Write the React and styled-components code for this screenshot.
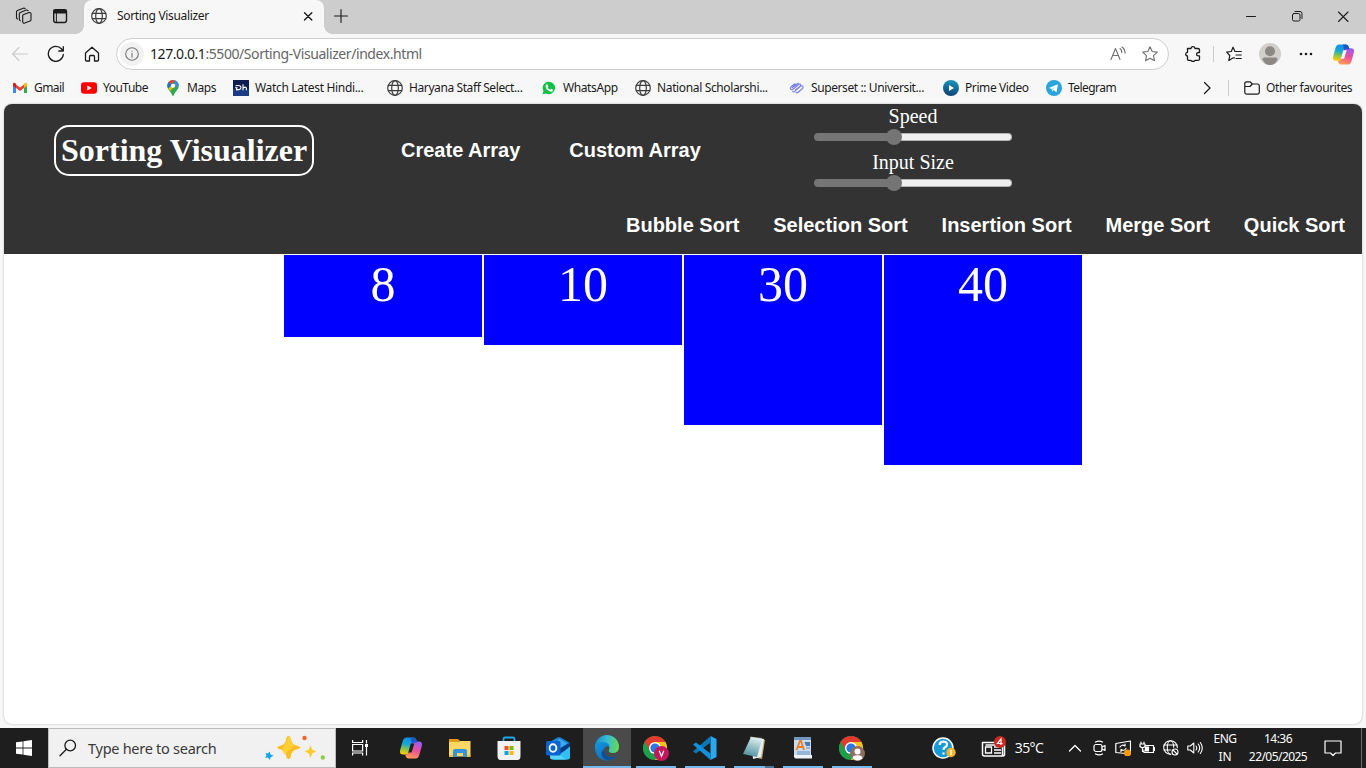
import React from 'react';
import styled, { createGlobalStyle } from 'styled-components';

const Global = createGlobalStyle`
  * { box-sizing: border-box; }
  html, body { margin: 0; padding: 0; overflow: hidden; }
  body { font-family: "Noto Sans", "Open Sans", sans-serif; background: #f7f7f7; }
  svg { display: block; flex: none; }
`;

const Desktop = styled.div`
  width: 1366px;
  height: 768px;
  display: flex;
  flex-direction: column;
  overflow: hidden;
  background: #f7f7f7;
`;

const Slot = styled.div`
  width: ${(p) => p.$w}px;
  flex: none;
  display: flex;
  align-items: center;
  justify-content: center;
`;

const Spacer = styled.div`
  flex: 1;
`;

const Label = styled.span`
  font-size: ${(p) => p.$size || 12}px;
  letter-spacing: ${(p) => p.$ls || 0}px;
  color: ${(p) => p.$color || '#1b1b1b'};
  line-height: 18px;
  white-space: nowrap;
`;

const Temperature = styled(Label)`
  font-family: "Open Sans", sans-serif;
`;

/* Browser chrome */
const TitleBar = styled.div`
  height: 34px;
  display: flex;
  align-items: stretch;
  background: #cdcdcd;
  padding: 0 0 2px 6px;
`;

const Tab = styled.div`
  position: relative;
  width: 240px;
  height: 34px;
  margin-left: 6px;
  padding: 0 8px 2px 7px;
  display: flex;
  align-items: center;
  gap: 10px;
  background: #f7f7f7;
  border-radius: 8px 8px 0 0;
  &::before, &::after {
    content: "";
    position: absolute;
    bottom: 0;
    width: 8px;
    height: 8px;
  }
  &::before { left: -8px; background: radial-gradient(circle at 0 0, transparent 7.5px, #f7f7f7 8px); }
  &::after { right: -8px; background: radial-gradient(circle at 100% 0, transparent 7.5px, #f7f7f7 8px); }
`;

const Toolbar = styled.div`
  height: 40px;
  display: flex;
  align-items: center;
  padding-left: 2px;
`;

const AddressBar = styled.div`
  width: 1053px;
  height: 32px;
  margin: 0 6px 0 6px;
  padding: 0 2px 0 4px;
  display: flex;
  align-items: center;
  border: 1px solid #cfcfcf;
  border-radius: 16px;
  background: #fff;
`;

const InfoDisc = styled.div`
  width: 24px;
  height: 24px;
  margin: 0 6px 0 -1px;
  display: flex;
  align-items: center;
  justify-content: center;
  border-radius: 50%;
  background: #f2f2f2;
`;

const Divider = styled.div`
  width: 1px;
  height: 16px;
  background: #cbcbcb;
`;

const Bookmarks = styled.div`
  height: 30px;
  display: flex;
  align-items: center;
  padding: 0 14px 2px 12px;
`;

const Bookmark = styled.div`
  width: ${(p) => p.$w}px;
  flex: none;
  display: flex;
  align-items: center;
  gap: 6px;
`;

/* Page */
const Page = styled.main`
  width: 1358px;
  height: 620px;
  margin: 0 4px 4px;
  border-radius: 8px;
  overflow: hidden;
  background: #fff;
  box-shadow: 0 0 2px rgba(0, 0, 0, 0.3);
`;

const Header = styled.header`
  height: 150px;
  background: #333;
  color: #fff;
  display: flex;
  flex-direction: column;
`;

const HeaderTop = styled.div`
  height: 92px;
  display: flex;
  align-items: center;
  padding-left: 50px;
`;

const Brand = styled.h1`
  width: 260px;
  height: 51px;
  margin: 0 87px 0 0;
  padding: 0 5px;
  border: 2px solid #fff;
  border-radius: 15px;
  font: bold 32px/47px "Liberation Serif", serif;
  white-space: nowrap;
`;

const Action = styled.a`
  font: bold 20px/24px "Liberation Sans", Arial, sans-serif;
  white-space: nowrap;
`;

const CreateActions = styled.div`
  width: 413px;
  display: flex;
  gap: 49px;
`;

const Sliders = styled.div`
  width: 198px;
  height: 92px;
  display: flex;
  flex-direction: column;
`;

const SliderGroup = styled.label`
  height: 46px;
  padding-top: 1px;
  display: flex;
  flex-direction: column;
  align-items: center;
  font: 20px/23px "Liberation Serif", serif;
`;

const Track = styled.div`
  width: 198px;
  height: 16px;
  margin-top: 1px;
  display: flex;
  align-items: center;
`;

const TrackDone = styled.div`
  width: 74px;
  height: 8px;
  border-radius: 4px 0 0 4px;
  background: #757575;
`;

const TrackRest = styled.div`
  flex: 1;
  height: 8px;
  margin-left: -4px;
  border: 1px solid #b2b2b2;
  border-left: 0;
  border-radius: 0 4px 4px 0;
  background: #efefef;
`;

const Thumb = styled.div`
  position: relative;
  z-index: 1;
  width: 16px;
  height: 16px;
  margin-left: -2px;
  flex: none;
  border-radius: 50%;
  background: #757575;
`;

const SortActions = styled.nav`
  height: 58px;
  padding: 0 17px 0 0;
  display: flex;
  align-items: center;
  justify-content: flex-end;
  gap: 33.9px;
`;

const Bars = styled.section`
  display: flex;
  justify-content: center;
  align-items: flex-start;
  gap: 2px;
  padding: 1px 0 0 0;
`;

const Bar = styled.div`
  width: 198px;
  height: ${(p) => p.$h}px;
  background: #00f;
  color: #fff;
  text-align: center;
  font: 50px/59px "Liberation Serif", serif;
`;

/* Taskbar */
const Taskbar = styled.footer`
  height: 40px;
  display: flex;
  align-items: stretch;
  background: #1e1e1e;
`;

const SearchBox = styled.div`
  width: 288px;
  display: flex;
  align-items: center;
  padding: 0 7px 0 10px;
  gap: 11px;
  background: #f1f1f1;
  border: 1px solid #bcbcbc;
`;

const TaskButton = styled.div`
  width: 49px;
  flex: none;
  display: flex;
  flex-direction: column;
  align-items: center;
  padding: 6px ${(p) => (p.$shift ? 1 : 2)}px 0 0;
  justify-content: space-between;
`;

const TaskTile = styled.div`
  width: 48px;
  padding-top: 6px;
  margin-right: 1px;
  flex: none;
  display: flex;
  flex-direction: column;
  align-items: center;
  justify-content: space-between;
  background: #4a4a4a;
  border-bottom: 2px solid #76b9ed;
`;

const Running = styled.div`
  width: 40px;
  height: 2px;
  background: ${(p) => (p.$grouped ? 'linear-gradient(to right, #76b9ed 31px, #4b7494 31px)' : '#76b9ed')};
`;

const Stack = styled.div`
  width: ${(p) => p.$w}px;
  flex: none;
  display: flex;
  flex-direction: column;
  align-items: center;
  justify-content: center;
`;

const ShowDesktop = styled.div`
  width: 5px;
  border-left: 1px solid #6a6a6a;
`;

const Line = ({ s = 16, c = '#1b1b1b', w = 1.1, vb = 16, children }) => (
  <svg width={s} height={s} viewBox={`0 0 ${vb} ${vb}`} fill="none" stroke={c} strokeWidth={w} strokeLinecap="round" strokeLinejoin="round">
    {children}
  </svg>
);

const Globe = ({ c = '#3c3c3c', w = 1.2 }) => (
  <Line c={c} w={w}>
    <circle cx="8" cy="8" r="7.3" />
    <ellipse cx="8" cy="8" rx="3.3" ry="7.3" />
    <path d="M1.3 5.4h13.4M1.3 10.6h13.4" />
  </Line>
);

const Workspaces = () => (
  <Line s={18} vb={18} w={1.1}>
    <path d="M8.200 7.800 14 5.600q1.800-.5 2 1.100v6q0 1-1 1.400l-5.300 2q-1.700.5-2-1.200V9q0-.8.5-1.200z" />
    <path d="M5.300 13.800q-1-.4-1-1.500V6.900q0-1 1-1.500l6-2.300q1-.4 1.800.5" />
    <path d="M2.500 12q-1-.4-1-1.500V5q0-1 1-1.400l5.700-2.300q1.100-.4 1.900.4" />
  </Line>
);

const TabActions = () => (
  <Line w={1.4}>
    <rect x="1.700" y="1.700" width="12.800" height="12.800" rx="2.200" />
    <path d="M2 2.200h12v2.600H2z" fill="#1b1b1b" />
    <path d="M4.400 5v9" strokeWidth="1" />
  </Line>
);

const CopilotLogo = ({ s = 24, id, gap }) => (
  <svg width={s} height={s} viewBox="0 0 24 24">
    <defs>
      <linearGradient id={`${id}a`} x1=".5" y1="0" x2=".3" y2="1">
        <stop offset="0" stopColor="#168be8" />
        <stop offset=".4" stopColor="#13a9d3" />
        <stop offset=".7" stopColor="#8bc34c" />
        <stop offset="1" stopColor="#ffd000" />
      </linearGradient>
      <linearGradient id={`${id}b`} x1=".7" y1="0" x2=".4" y2="1">
        <stop offset="0" stopColor="#9a5cf5" />
        <stop offset=".5" stopColor="#ec4f9c" />
        <stop offset="1" stopColor="#ff9a55" />
      </linearGradient>
    </defs>
    <path d="M7.500 1.500h7q2 0 2.700 2l1 3h-3q-2 0-2.700 2L10 16q-.7 2.500-3 2.500H4.500q-4.500 0-3.300-4.500l2.500-9q1-3.500 3.800-3.500z" fill={`url(#${id}a)`} />
    <path d="M16.500 22.500h-7q-2 0-2.700-2l-.7-2h1q2.200 0 2.900-2.500L12.500 8q.7-2.500 3-2.500h4q4.500 0 3.300 4.500l-2.500 9q-1 3.500-3.800 3.500z" fill={`url(#${id}b)`} />
    <path d="M11.500 1.500h3q2 0 2.700 2l1 3h-3q-1.800 0-2.400 1.500z" fill="#1c58c8" />
    <path d="m11.800 7.500 3.600 0-.6 1.800-2.200 7.200-3.300 0z" fill={gap} />
  </svg>
);

const Chrome = ({ children }) => (
  <svg width="26" height="28" viewBox="0 0 26 28">
    <circle cx="12" cy="14" r="12" fill="#1e9e4a" />
    <path d="M1.600 8A12 12 0 0 1 22.400 8L12 8.600 7 17z" fill="#e33b2e" />
    <path d="M22.400 8A12 12 0 0 1 12 26l5.200-9L12 8z" fill="#fbc116" />
    <path d="M1.600 8 7 17l5 3-3 5.600A12 12 0 0 1 1.600 8z" fill="#1e9e4a" />
    <circle cx="12" cy="14" r="6" fill="#fff" />
    <circle cx="12" cy="14" r="4.600" fill="#2b78e4" />
    {children}
  </svg>
);

const icons = {
  gmail: (
    <svg width="16" height="16" viewBox="0 0 16 16">
      <path d="M1 4v9h3V6.500z" fill="#4285f4" /><path d="M15 4v9h-3V6.500z" fill="#34a853" />
      <path d="M4 4.500 8 7.600l4-3.100v3.600L8 11 4 8.100z" fill="#ea4335" />
      <path d="M1 5V4q.3-2 2-1l1 1v4L1 6z" fill="#c5221f" /><path d="M15 5V4q-.3-2-2-1l-1 1v4l3-2z" fill="#fbbc04" />
    </svg>
  ),
  youtube: (
    <svg width="16" height="16" viewBox="0 0 16 16">
      <rect x="0" y="2.300" width="16" height="11.500" rx="3" fill="#f00" /><path d="M6.300 5.500v5l4.400-2.500z" fill="#fff" />
    </svg>
  ),
  maps: (
    <svg width="16" height="16" viewBox="0 0 16 16">
      <path d="M8 0a5.800 5.800 0 0 1 5.800 5.800c0 3.700-3.500 5.400-5 9.500q-.8 1.300-1.600 0c-1.500-4.100-5-5.800-5-9.500A5.800 5.800 0 0 1 8 0z" fill="#34a853" />
      <path d="M3.500 2.200A5.800 5.800 0 0 1 9.800.3L5 6z" fill="#ea4335" />
      <path d="M9.800.3q3.500 1.200 4 5L9 8z" fill="#4285f4" />
      <path d="M3.500 2.200Q1.300 5.200 3.300 8.800L7 5z" fill="#1a73e8" />
      <path d="M3.300 8.800 4.900 11l6-6.200L8 4z" fill="#fbbc04" /><circle cx="8" cy="5.800" r="2.100" fill="#fff" />
    </svg>
  ),
  watch: (
    <svg width="16" height="16" viewBox="0 0 16 16">
      <path d="M0 0h16v16H0z" fill="#0f1c50" /><path d="M0 9h16v7H0z" fill="#1b3b85" />
      <path d="M2.500 5.700q5.500-.8 5.500 1.800 0 2.500-4.400 2.400V7.800M2 7.800h2.600M10 4.300v5.900m0-2q2.900-2.200 3.400 0v2" fill="none" stroke="#fff" strokeWidth="1.100" />
    </svg>
  ),
  globe: <Globe />,
  whatsapp: (
    <svg width="16" height="16" viewBox="0 0 16 16">
      <path d="M1.500 14.300 2.500 11A6.200 6.200 0 1 1 5 13.400z" fill="#0fc143" />
      <path d="M5.200 4.600q1-.8 1.500.3l.6 1.300-.7 1q1 1.700 2.700 2.500l.9-.9 1.700.9q.4 1.900-1.900 2Q5.600 11 4.500 6.500z" fill="#fff" />
    </svg>
  ),
  superset: (
    <Line w={1.200} c="#7d83e6">
      <path d="M5.500 4 2.200 6.700Q.5 8.500 2.200 9.500q1.200.5 2.800-1L9.600 4.600q1.500-1 2 0 .3 1-.7 1.800L6.500 10M7.200 4 3.200 7.700M3.800 11.500q1 .7 2.200-.4l5.500-4.800q1.700-1.200 2.500.3.300 1.200-1 2.500l-3.500 3M9.300 3.200 5.500 6.300M7 12.500q1 .7 2-.2l4-3.300" />
    </Line>
  ),
  prime: (
    <svg width="16" height="16" viewBox="0 0 16 16">
      <defs><linearGradient id="pv" x1=".6" x2=".4" y2="1"><stop offset="0" stopColor="#1c97b8" /><stop offset="1" stopColor="#0d3f75" /></linearGradient></defs>
      <circle cx="8" cy="8" r="8" fill="url(#pv)" /><path d="M6 5v6l5-3z" fill="#fff" />
    </svg>
  ),
  telegram: (
    <svg width="16" height="16" viewBox="0 0 16 16">
      <circle cx="8" cy="8" r="8" fill="#2ba3dc" /><path d="m2.800 8 9.200-3.800-1.500 8-3-2.100-1.300 1.300-.5-2.500z" fill="#fff" /><path d="m5.700 8.900 4.400-2.800-3.100 3.300-.8 2z" fill="#b9dcf0" />
    </svg>
  ),
};

const bookmarks = [
  ['gmail', 'Gmail', 69, -0.55], ['youtube', 'YouTube', 84, -0.5], ['maps', 'Maps', 68],
  ['watch', 'Watch Latest Hindi...', 154, -0.32], ['globe', 'Haryana Staff Select...', 154],
  ['whatsapp', 'WhatsApp', 94], ['globe', 'National Scholarshi...', 154, -0.36],
  ['superset', 'Superset :: Universit...', 154], ['prime', 'Prime Video', 103], ['telegram', 'Telegram', 149, -0.55],
];

const bars = [[8, 82], [10, 90], [30, 170], [40, 210]];

const BrowserChrome = () => (
  <>
    <TitleBar>
      <Slot $w={36}><Workspaces /></Slot>
      <Slot $w={36}><TabActions /></Slot>
      <Tab>
        <Globe />
        <Label $ls={-0.34}>Sorting Visualizer</Label>
        <Spacer />
        <Line w={1.4}><path d="m4.500 4.700 7.300 7.300m0-7.300-7.300 7.300" /></Line>
      </Tab>
      <Slot $w={34}><Line><path d="M8 1.500v13M1.500 8h13" /></Line></Slot>
      <Spacer />
      <Slot $w={46}><Line w={1}><path d="M3.500 8.500h9" /></Line></Slot>
      <Slot $w={46}><Line w={1}><rect x="3.500" y="5.500" width="7.500" height="7.500" rx="1.500" /><path d="M6 3.500h5q2 0 2 2v5" /></Line></Slot>
      <Slot $w={46}><Line w={1.100}><path d="m3.500 4 9.500 9.500m0-9.500L3.500 13.500" /></Line></Slot>
    </TitleBar>
    <Toolbar>
      <Slot $w={36}><Line c="#c9c9c9"><path d="M15.500 8H.8M7 1.500.6 8 7 14.500" /></Line></Slot>
      <Slot $w={36}><Line s={18} vb={18} w={1.300}><path d="M16.300 9.500A7.500 7.500 0 1 1 14.600 4l1.500 1.800M16.300 1.600v4.400h-4.500" /></Line></Slot>
      <Slot $w={36}><Line w={1.300}><path d="M1.500 7 8 1.200 14.500 7v7q0 1-1 1h-3v-4q0-1.500-1-1.500h-3q-1 0-1 1.500v4h-3q-1 0-1-1z" /></Line></Slot>
      <AddressBar>
        <InfoDisc><Line s={14} vb={14} c="#767676"><circle cx="7" cy="7" r="6.300" /><path d="M7 6.300v4M7 4v.2" /></Line></InfoDisc>
        <Label $size={14} $ls={-0.43} $color="#666"><Label $size={14} $ls={-0.43}>127.0.0.1</Label>:5500/Sorting-Visualizer/index.html</Label>
        <Spacer />
        <Slot $w={32}><Line c="#707070"><path d="m1 13.500 4.500-11 4.500 11M2.700 9.500h5.800M10 2.500q2 1.500 1.800 4M12 1q3.200 2.300 3 6" /></Line></Slot>
        <Slot $w={32}><Line c="#707070"><path d="m8 .8 2.200 4.700 5.100.6-3.800 3.500 1 5.200L8 12.300l-4.500 2.500 1-5.200L.7 6.100l5.100-.6z" /></Line></Slot>
      </AddressBar>
      <Slot $w={36}><Line w={1.300}><path d="M2.500 2.500H6q.2-1.800 2-1.800t2 1.800h3q1.500 0 1.500 1.500v2.500h-1q-2 .2-2 1.700t2 1.700h1v3q0 1.500-1.500 1.500H10q-.2 1-2 1t-2-1H4q-1.500 0-1.500-1.500V10Q.7 9.800.7 8.200T2.500 6.400z" /></Line></Slot>
      <Slot $w={4}><Divider /></Slot>
      <Slot $w={38}><Line w={1.200}><path d="m8.500 11.800-1.700.2-4 2.500 1-5L.6 6.100l4.700-.6L7 1.200l2 4.300h6.300M10 9h5.300M10 12.500h5.300" /></Line></Slot>
      <Slot $w={34}><svg width="22" height="22" viewBox="0 0 22 22"><circle cx="11" cy="11" r="11" fill="#d1cfcb" /><circle cx="11" cy="8.200" r="5" fill="#8b8782" /><path d="M3.500 16.500q0-2 2-2h11q2 0 2 2-2.500 5.500-7.500 5.500t-7.500-5.500z" fill="#8b8782" /></svg></Slot>
      <Slot $w={37}><svg width="16" height="16"><g fill="#1b1b1b"><circle cx="3" cy="8" r="1.300" /><circle cx="8" cy="8" r="1.300" /><circle cx="13" cy="8" r="1.300" /></g></svg></Slot>
      <Slot $w={39}><CopilotLogo s={23} id="tb" gap="#f7f7f7" /></Slot>
    </Toolbar>
    <Bookmarks>
      {bookmarks.map(([icon, text, w, ls = -0.4]) => (
        <Bookmark key={text} $w={w}>{icons[icon]}<Label $ls={ls}>{text}</Label></Bookmark>
      ))}
      <Slot $w={23}><Line s={14} vb={14} w={1.300}><path d="M4.500 1.500 10 7l-5.500 5.500" /></Line></Slot>
      <Slot $w={21}><Divider /></Slot>
      <Slot $w={5} />
      <Bookmark $w={108}>
        <Line w={1.200}><path d="M.8 12V3.500q0-1.700 1.700-1.700h3.700L8.300 4h5q2 0 2 2v6q0 2.200-2 2.200H3Q.8 14.200.8 12zM.8 6.500H6L8.300 4" /></Line>
        <Label $ls={-0.4}>Other favourites</Label>
      </Bookmark>
    </Bookmarks>
  </>
);

const RangeControl = ({ name }) => (
  <SliderGroup>{name}<Track><TrackDone /><Thumb /><TrackRest /></Track></SliderGroup>
);

const Visualizer = () => (
  <Page>
    <Header>
      <HeaderTop>
        <Brand>Sorting Visualizer</Brand>
        <CreateActions><Action>Create Array</Action><Action>Custom Array</Action></CreateActions>
        <Sliders><RangeControl name="Speed" /><RangeControl name="Input Size" /></Sliders>
      </HeaderTop>
      <SortActions>
        {['Bubble', 'Selection', 'Insertion', 'Merge', 'Quick'].map((n) => <Action key={n}>{n} Sort</Action>)}
      </SortActions>
    </Header>
    <Bars>{bars.map(([n, h]) => <Bar key={n} $h={h}>{n}</Bar>)}</Bars>
  </Page>
);

const TaskView = () => (
  <svg width="18" height="28" viewBox="0 0 18 28" fill="none" stroke="#fff" strokeWidth="1.200">
    <path d="M1.600 6v2.500h10V6M1.600 21.500V19h10v2.500M1.600 10.500h10V17h-10zM15.500 6v3.500M15.500 13v8.500" /><path d="M14 10h3v3h-3z" fill="#fff" stroke="none" />
  </svg>
);

const Explorer = () => (
  <svg width="24" height="28" viewBox="0 0 24 28">
    <path d="M1 5h9l2 2h10v4H1z" fill="#e29b0c" /><path d="M1 8h10l2-1h9.500v15.500H1z" fill="#ffd765" />
    <path d="M5 23v-6q0-2 2-2h10q2 0 2 2v6h-4v-4H9v4z" fill="#3394dc" /><path d="M1 21h4v2H1zM19 21h3.500v2H19z" fill="#f4bc38" />
  </svg>
);

const Store = () => (
  <svg width="24" height="28" viewBox="0 0 24 28">
    <path d="M6.500 8V5q0-1.500 1.500-1.500h8q1.500 0 1.500 1.500v3" fill="none" stroke="#20a7e2" strokeWidth="1.800" />
    <path d="M.5 7h23v15q0 4-3 4h-17q-3 0-3-4z" fill="#f2f2f2" />
    <path d="M7.500 12h4v4h-4z" fill="#f25022" /><path d="M12.500 12h4v4h-4z" fill="#7fba00" /><path d="M7.500 17h4v4h-4z" fill="#00a4ef" /><path d="M12.500 17h4v4h-4z" fill="#ffb900" />
  </svg>
);

const Outlook = () => (
  <svg width="26" height="28" viewBox="0 0 26 28">
    <path d="M3 9 12.500 3.600q1.500-.8 3 0L25 9v14q0 2.500-3 2.500H8q-3 0-3-2.500z" fill="#1687d9" />
    <path d="M13 5.500q1-.6 2.200 0L22 9.500 14 15z" fill="#3fa9ee" />
    <path d="M25 8.500v5L14 20v-5z" fill="#0a3a86" />
    <path d="M25 12.500V23q0 2.500-3 2.500H9z" fill="#2fc1f5" /><path d="M5 23v-2h10l6 4.500H8q-3 0-3-2.500z" fill="#57d6fa" />
    <rect x="1" y="7" width="14.500" height="14.500" rx="1.500" fill="#0b63ce" /><ellipse cx="8" cy="14" rx="3.400" ry="3.800" fill="none" stroke="#fff" strokeWidth="1.900" />
  </svg>
);

const Edge = () => (
  <svg width="26" height="28" viewBox="0 0 26 28">
    <defs>
      <linearGradient id="eg" x1="0" x2="1" y1=".3" y2=".4"><stop offset="0" stopColor="#168bd2" /><stop offset=".5" stopColor="#36bdd4" /><stop offset="1" stopColor="#65d950" /></linearGradient>
      <linearGradient id="eb" x1="0" x2="1" y2="1"><stop offset="0" stopColor="#1496dc" /><stop offset="1" stopColor="#0b61b5" /></linearGradient>
    </defs>
    <path d="M1 13A12 12 0 0 1 25 13q0 6-6.500 6-5 0-3.500-4 .6-5-5-5-5 0-9 4z" fill="url(#eg)" />
    <path d="M1 14q1-6 8-6 6.500.5 6.500 5-3-1.500-5 1.500-1.500 5 4 8 4 2 9-1-3.500 5-10.500 5Q2 26 1 14z" fill="url(#eb)" />
    <path d="M10.500 14.500q-1.500 5 4 8 4 2 9-1-4 5-11 4.500-5.500-2.500-5-7 .5-3 3-4.500z" fill="#124f91" />
    <path d="M15.500 13q-4-1.500-5 1.500-1 4 4 6.500 5 1.500 9-1 .5-1-.5-.8-8 2-9-2 1.800-1.800 1.500-4.200z" fill="#4a4a4a" />
  </svg>
);

const VSCode = () => (
  <svg width="26" height="28" viewBox="0 0 26 28">
    <path d="m18.500 2 6 3v18l-6 3z" fill="#2aa8f2" /><path d="M18.500 2v6.500L4 19.500l-3-2z" fill="#0877bb" /><path d="M18.500 26v-6.500L4 8.500l-3 2z" fill="#1290dc" />
  </svg>
);

const Notepad = () => (
  <svg width="26" height="28" viewBox="0 0 26 28">
    <defs><linearGradient id="np" x1=".6" x2=".3" y2="1"><stop offset="0" stopColor="#d5ecef" /><stop offset="1" stopColor="#4b8c98" /></linearGradient></defs>
    <path d="m22 5 2 1-3 19-5-1z" fill="#c2aa75" /><path d="m10 3 13 2-3 18-8 2z" fill="#e8eeee" /><path d="M9.500 4 21 5.500 16 23 2 20z" fill="url(#np)" /><path d="m9.500 3.500 12 1.500" stroke="#efefef" strokeWidth="2" strokeDasharray="1 1" />
  </svg>
);

const WordPad = () => (
  <svg width="20" height="28" viewBox="0 0 20 28">
    <path d="M1 3h17v20H1z" fill="#c5dcf4" /><path d="M1 3h17v3H1z" fill="#7296bd" /><path d="M1 21h18v3.500H3q-2 0-2-2z" fill="#edf3fa" />
    <path d="m3.500 16 3.500-9h1l3 9M5 13h5" fill="none" stroke="#ef7e23" strokeWidth="1.800" /><path d="M11.500 8H17v4h-4z" fill="#477ab5" /><path d="M13 14h4M4 18h13M4 20h13" stroke="#6b8fb9" />
  </svg>
);

const Sparkles = () => (
  <svg width="64" height="30" viewBox="0 0 64 30">
    <path d="M24.500 3q2 0 2.800 5 1 3 3.500 4 5.500 1.500 5.500 2.500t-5.500 2.500q-2.500 1-3.500 4-.8 5-2.800 5t-2.800-5q-1-3-3.500-4-5-1.500-5-2.500t5-2.500q2.500-1 3.500-4 .8-5 2.800-5z" fill="#fbbd20" />
    <path d="M24.500 3q2 0 2.800 5 1 3 3.500 4L20 22q-1-4-2-4.500z" fill="#ffd33c" opacity=".8" />
    <path d="m46.500 12.500 1.800 4.200 4 1.800-4 1.800-1.800 4.700-1.800-4.700-4-1.800 4-1.800z" fill="#ffc928" />
    <path d="m5.500 18.500 1 3 3 1-3 2-.8 2.500-1.700-2.500-3 .5 1.500-2.500-1-2.500 2.500.5z" fill="#13a5e8" />
    <circle cx="40.500" cy="5" r="2.200" fill="#f0642f" /><circle cx="58.800" cy="24.500" r="2.200" fill="#8ccb45" />
  </svg>
);

const Task = ({ children, running, grouped, shift }) => (
  <TaskButton $shift={shift}>{children}{running && <Running $grouped={grouped} />}</TaskButton>
);

const WindowsTaskbar = () => (
  <Taskbar>
    <Slot $w={48}><svg width="16" height="16" viewBox="0 0 16 16"><path d="M0 2.300 6.600 1.400v6.200H0zM7.400 1.300 16 0v7.600H7.400zM0 8.400h6.600v6.200L0 13.700zM7.400 8.400H16V16l-8.600-1.300z" fill="#fff" /></svg></Slot>
    <SearchBox>
      <Line s={18} vb={18} w={1.300}><circle cx="11.200" cy="6.500" r="5.300" /><path d="M7.400 10.300 1 16.700" /></Line>
      <Label $size={14.5} $ls={-0.27} $color="#3a3a3a">Type here to search</Label>
      <Spacer />
      <Sparkles />
    </SearchBox>
    <Task><TaskView /></Task>
    <Slot $w={51}><CopilotLogo s={24} id="task" gap="#1e1e1e" /></Slot>
    <Task><Explorer /></Task>
    <Task><Store /></Task>
    <Task><Outlook /></Task>
    <TaskTile><Edge /></TaskTile>
    <Task running><Chrome><circle cx="18.500" cy="19.500" r="7.500" fill="#c2185b" /><path d="m16.200 16.700 2.300 5.600 2.300-5.600" fill="none" stroke="#fff" strokeWidth="1.200" /></Chrome></Task>
    <Task running><VSCode /></Task>
    <Task running grouped><Notepad /></Task>
    <Task running><WordPad /></Task>
    <Task running><Chrome><circle cx="18.500" cy="19.500" r="7.500" fill="#8d6e63" /><circle cx="18.500" cy="17.500" r="3" fill="#fff" /><path d="M13.500 24.500q0-3.200 5-3.200t5 3.200q-5 4-10 0z" fill="#fff" /></Chrome></Task>
    <Spacer />
    <Slot $w={26}>
      <svg width="24" height="24" viewBox="0 0 24 24">
        <circle cx="11" cy="12" r="10" fill="#169bd8" stroke="#fff" strokeWidth="1.500" />
        <path d="M7.500 9q.5-3.500 4-3.500 3.700.3 3.500 3 0 1.700-2 2.800-1.600 1-1.500 2.700M11.500 16.500v2" fill="none" stroke="#fff" strokeWidth="2.200" />
        <circle cx="19" cy="16.500" r="4.700" fill="#f5b52d" /><path d="M19 14v5" stroke="#fff" strokeWidth="1.400" />
      </svg>
    </Slot>
    <Slot $w={23} />
    <Slot $w={28}>
      <svg width="26" height="28" viewBox="0 0 26 28">
        <path d="M1.500 8.500h20V22h-18q-2 0-2-2zM21.500 11h2v9.500q0 1.500-2 1.500" fill="none" stroke="#fff" strokeWidth="1.500" />
        <path d="M4.500 13h6v6h-6zM13 13h7M13 16h7M13 19h7M4.500 11h15" fill="none" stroke="#fff" strokeWidth="1.300" />
        <circle cx="19" cy="8" r="6" fill="#c92b22" /><path d="M20 11V5l-3.500 4.500h5" fill="none" stroke="#fff" strokeWidth="1.200" />
      </svg>
    </Slot>
    <Slot $w={42}><Temperature $size={14} $ls={-0.55} $color="#fff">35°C</Temperature></Slot>
    <Slot $w={13} />
    <Slot $w={24}><Line c="#fff" w={1.300}><path d="M2.500 11 8 5.500l5.500 5.500" /></Line></Slot>
    <Slot $w={24}><Line c="#fff" w={1.200}><rect x="3" y="4.500" width="8" height="7" rx="2" /><path d="m11 7 3-1.500v5L11 9M4.500 2Q8 .2 11.500 2M4.500 14q3.500 1.800 7 0" /></Line></Slot>
    <Slot $w={24}>
      <Line c="#fff" w={1.200}><path d="M.8 3.500 15.500 1v13L.8 12.500zM5 7q2-3 5-1V4M11 8.500q-2 3-5 1v2" /><circle cx="12.500" cy="13" r="3.500" fill="#ff9800" stroke="none" /></Line>
    </Slot>
    <Slot $w={24}><Line c="#fff" w={1.200}><path d="M6 5.500h8.500v7H5V10M15.500 7.500v3M1 4h5v2.500Q3.500 9 1 6.500zM2 2v2M5 2v2M3.500 8v3.500H5" /><path d="M6.500 7h3v4h-3z" fill="#fff" /></Line></Slot>
    <Slot $w={24}>
      <Line c="#fff" w={1.100}><circle cx="7.500" cy="7.500" r="6.800" /><ellipse cx="7.500" cy="7.500" rx="3.200" ry="6.800" /><path d="M1 5h13M1 10h13" /><circle cx="12" cy="12" r="4.500" fill="#1e1e1e" stroke="none" /><circle cx="12" cy="12" r="3" /><path d="m10 10 4 4" /></Line>
    </Slot>
    <Slot $w={24}><Line c="#fff" w={1.100}><path d="M.8 6v4h2.500l3.500 3V3L3.300 6zM9 6q1.500 2 0 4M11.200 4q3 4 0 8M13.300 2.500q4 5.500 0 11" /></Line></Slot>
    <Stack $w={36}><Label $ls={-0.5} $color="#fff">ENG</Label><Label $color="#fff">IN</Label></Stack>
    <Stack $w={70}><Label $ls={-0.5} $color="#fff">14:36</Label><Label $ls={-0.55} $color="#fff">22/05/2025</Label></Stack>
    <Slot $w={40}><Line s={18} vb={18} c="#fff" w={1.200}><path d="M1 2h16v12h-5.500L9 16.500 6.500 14H1z" /></Line></Slot>
    <Slot $w={8} />
    <ShowDesktop />
  </Taskbar>
);

export default function App() {
  return (
    <Desktop>
      <Global />
      <BrowserChrome />
      <Visualizer />
      <WindowsTaskbar />
    </Desktop>
  );
}
